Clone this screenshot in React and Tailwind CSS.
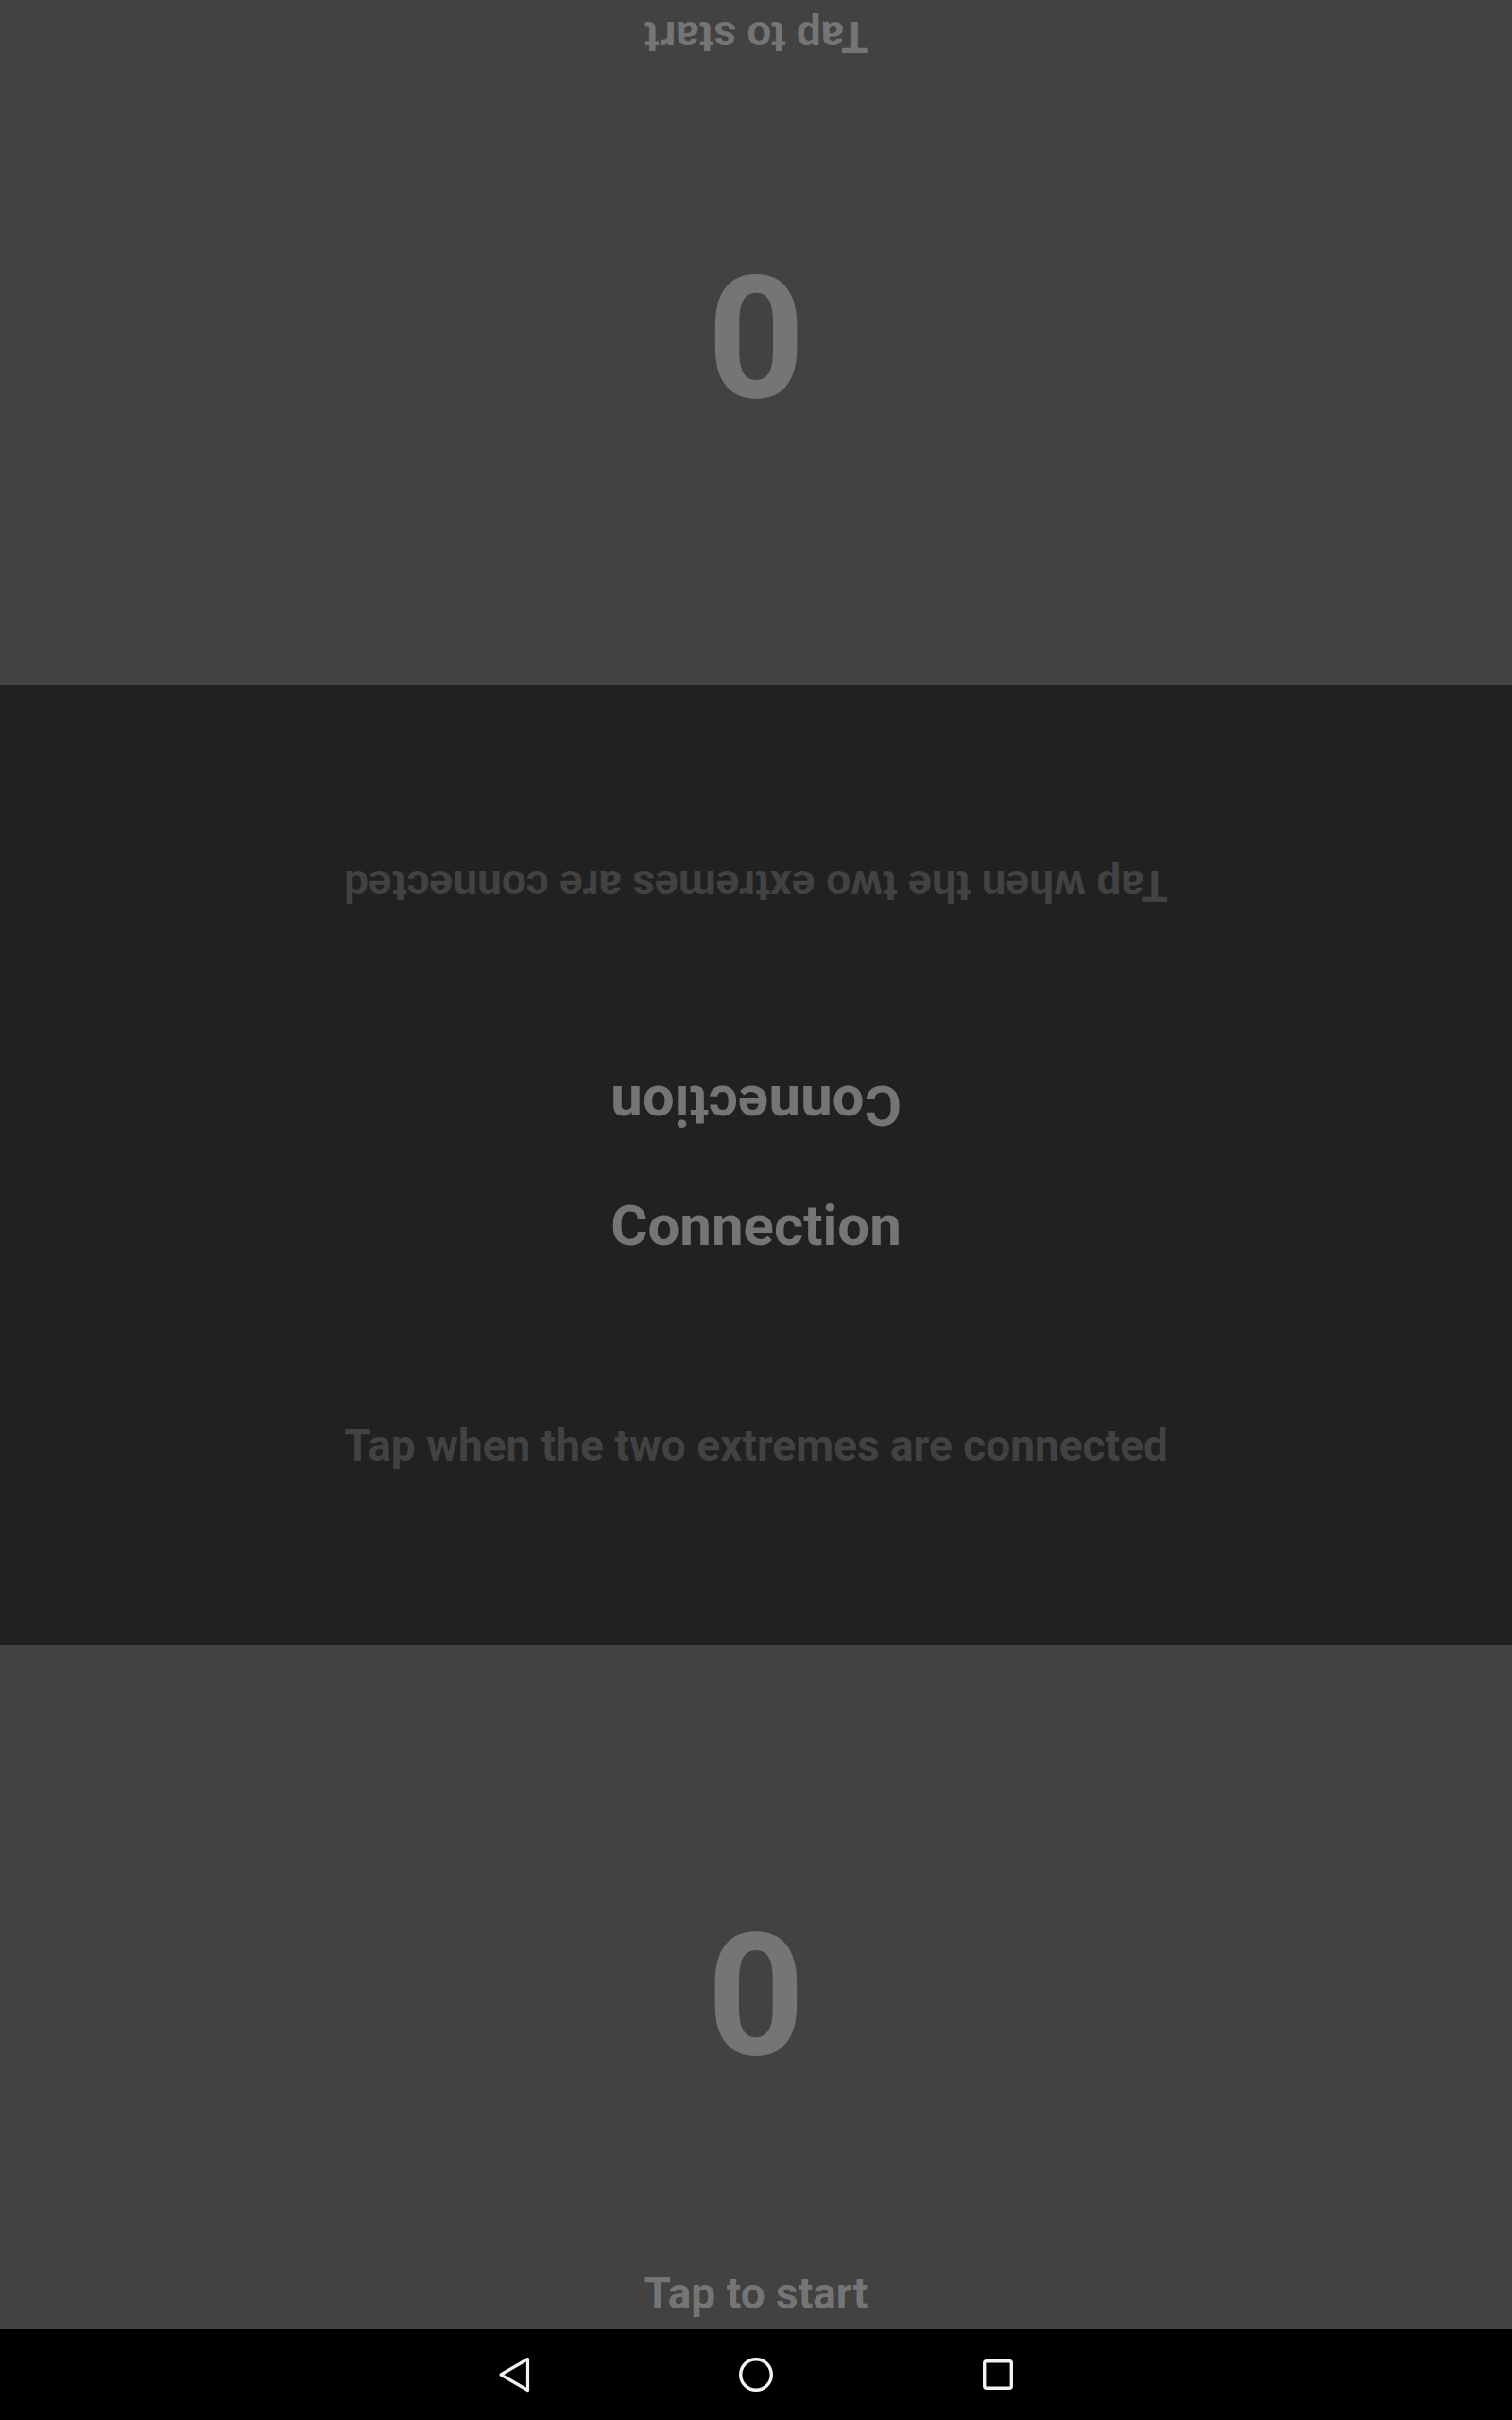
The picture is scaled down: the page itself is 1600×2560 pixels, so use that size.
import { Fragment } from 'react';

const font = { fontFamily: 'Roboto, "Noto Sans", sans-serif' };

function PlayerPanel({ flipped }) {
  return (
    <div
      className={`flex h-[724px] flex-col items-center bg-[#424242] font-bold text-[#757575] ${
        flipped ? 'rotate-180' : ''
      }`}
    >
      <div className="mt-[282px] text-[180px] leading-none">0</div>
      <div className="mt-auto pb-[15px] text-[46px] leading-none">Tap to start</div>
    </div>
  );
}

function HintHalf({ flipped }) {
  return (
    <div className={`flex flex-1 flex-col items-center font-bold ${flipped ? 'rotate-180' : ''}`}>
      <div className="mt-[34px] text-[60px] leading-none text-[#757575]">Connection</div>
      <div className="mt-[179px] text-[46px] leading-none text-[#424242]">
        Tap when the two extremes are connected
      </div>
    </div>
  );
}

function BackIcon() {
  return (
    <svg width="40" height="40" viewBox="0 0 40 40" fill="none">
      <path
        d="M34.5 3.5 L6 20 L34.5 36.5 Z"
        stroke="#f2f2f2"
        strokeWidth="3.2"
        strokeLinejoin="round"
      />
    </svg>
  );
}

function HomeIcon() {
  return (
    <svg width="40" height="40" viewBox="0 0 40 40" fill="none">
      <circle cx="20" cy="20" r="16.3" stroke="#f2f2f2" strokeWidth="3.4" />
    </svg>
  );
}

function RecentsIcon() {
  return (
    <svg width="40" height="40" viewBox="0 0 40 40" fill="none">
      <rect x="5.7" y="5.7" width="28.6" height="28.6" rx="2" stroke="#f2f2f2" strokeWidth="3.4" />
    </svg>
  );
}

export default function App() {
  const navIcons = [BackIcon, HomeIcon, RecentsIcon];

  return (
    <div className="flex h-[2560px] w-[1600px] flex-col overflow-hidden" style={font}>
      <div className="h-[725px]">
        <div className="h-[725px] rotate-180 bg-[#424242]">
          <PlayerPanel />
        </div>
      </div>

      <div className="flex h-[1015px] flex-col bg-[#212121]">
        <HintHalf flipped />
        <HintHalf />
      </div>

      <PlayerPanel />

      <nav className="flex h-[96px] items-center justify-center gap-[216px] bg-black">
        {navIcons.map((Icon, i) => (
          <Fragment key={i}>
            <Icon />
          </Fragment>
        ))}
      </nav>
    </div>
  );
}
